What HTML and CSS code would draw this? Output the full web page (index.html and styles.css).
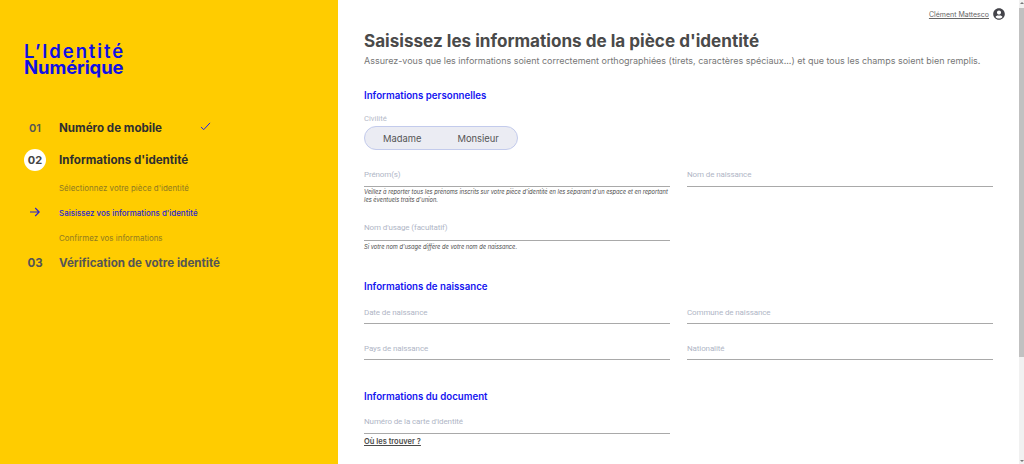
FILE: index.html
```html
<!DOCTYPE html>
<html lang="fr">
<head>
<meta charset="utf-8">
<title>Informations d'identité</title>
<link rel="stylesheet" href="styles.css">
</head>
<body>
<div class="page">
  <aside class="sidebar">
    <div class="logo"><div class="logo-top">L’Identité</div><div class="logo-bottom">Numérique</div></div>
    <ol class="steps">
      <li class="step step-done"><span class="num">01</span><span class="step-name">Numéro de mobile</span>
        <svg class="check" width="11" height="9" viewBox="0 0 12 10"><path d="M1 5.500 4 8.500 11 1" fill="none" stroke="#1f1ff0" stroke-width="1.100"/></svg></li>
      <li class="step step-current"><span class="num num-circle">02</span><span class="step-name">Informations d'identité</span></li>
      <li class="sub">Sélectionnez votre pièce d'identité</li>
      <li class="sub sub-active"><svg class="arrow" width="10" height="10" viewBox="0 0 10 10"><path d="M0 5H9M5.200 1 9.200 5 5.200 9" fill="none" stroke="#2a1fd0" stroke-width="1.100"/></svg>Saisissez vos informations d'identité</li>
      <li class="sub">Confirmez vos informations</li>
      <li class="step step-next"><span class="num">03</span><span class="step-name">Vérification de votre identité</span></li>
    </ol>
  </aside>
  <main class="main">
    <div class="user"><span class="user-name">Clément Mattesco</span>
      <svg width="12" height="12" viewBox="0 0 496 512"><path fill="#44444a" d="M248 8C111 8 0 119 0 256s111 248 248 248 248-111 248-248S385 8 248 8zm0 96c48.600 0 88 39.400 88 88s-39.400 88-88 88-88-39.400-88-88 39.400-88 88-88zm0 344c-58.700 0-111.300-26.600-146.500-68.200 18.800-35.400 55.600-59.800 98.500-59.800 2.400 0 4.800.4 7.100 1.100 13 4.200 26.600 6.900 40.900 6.900 14.300 0 28-2.700 40.900-6.900 2.300-.7 4.700-1.100 7.100-1.100 42.900 0 79.700 24.400 98.500 59.800C359.300 421.400 306.700 448 248 448z"/></svg>
    </div>
    <h1 class="title">Saisissez les informations de la pièce d'identité</h1>
    <p class="lead">Assurez-vous que les informations soient correctement orthographiées (tirets, caractères spéciaux...) et que tous les champs soient bien remplis.</p>

    <h2 class="section section-perso">Informations personnelles</h2>
    <div class="label-small">Civilité</div>
    <div class="toggle"><span>Madame</span><span>Monsieur</span></div>

    <div class="grid grid-names">
      <div class="col">
        <div class="field">Prénom(s)</div>
        <p class="hint">Veillez à reporter tous les prénoms inscrits sur votre pièce d'identité en les séparant d'un espace et en reportant les éventuels traits d'union.</p>
        <div class="field field-usage">Nom d'usage (facultatif)</div>
        <p class="hint hint-usage">Si votre nom d'usage diffère de votre nom de naissance.</p>
      </div>
      <div class="col"><div class="field">Nom de naissance</div></div>
    </div>

    <h2 class="section section-birth">Informations de naissance</h2>
    <div class="grid grid-birth">
      <div class="field">Date de naissance</div>
      <div class="field">Commune de naissance</div>
      <div class="field">Pays de naissance</div>
      <div class="field">Nationalité</div>
    </div>

    <h2 class="section section-doc">Informations du document</h2>
    <div class="grid grid-doc">
      <div class="col">
        <div class="field">Numéro de la carte d'identité</div>
        <a class="where" href="#">Où les trouver ?</a>
      </div>
    </div>
  </main>
  <div class="scrollbar"><span class="scroll-up"></span><span class="scroll-thumb"></span><span class="scroll-down"></span></div>
</div>
</body>
</html>
```
FILE: styles.css
```css
* { box-sizing: border-box; }
html, body { margin: 0; height: 100%; overflow: hidden; background: #fff; }
body { font-family: "Inter", "Open Sans", sans-serif; color: #4a4a4a; }
.page { display: flex; height: 464px; width: 1024px; }

.sidebar { width: 338px; flex: none; background: #ffcc00; padding: 44px 0 0 24px; }
.logo { color: #0f0fe6; font-weight: 600; height: 68px; }
.logo-top { font-size: 18.500px; line-height: 15px; letter-spacing: 1.900px; white-space: nowrap; }
.logo-bottom { font-size: 18.500px; line-height: 16px; font-weight: 700; letter-spacing: -0.100px; white-space: nowrap; }

.steps { list-style: none; margin: 0; padding: 0; }
.step { display: flex; align-items: center; font-weight: 700; }
.num { width: 22px; margin-right: 13px; text-align: center; font-size: 11px; font-weight: 600; color: #555; }
.step-name { font-size: 11.600px; color: #2f2f2f; }
.step-done { height: 32px; }
.check { margin: -3px 0 0 38px; }
.step-current { height: 31px; }
.num-circle { height: 22px; border-radius: 50%; background: #fff; line-height: 22px; font-weight: 700; color: #444; }
.step-next { height: 26px; }
.step-next .step-name, .step-next .num { color: #555; }
.step-next .num { font-weight: 700; font-size: 11.500px; }
.sub { display: flex; align-items: center; height: 25px; padding-left: 35px; font-size: 7.950px; font-weight: 400; color: #8f7a20; position: relative; white-space: nowrap; }
.sub-active { color: #2a1fd0; font-weight: 500; }
.arrow { position: absolute; left: 6px; top: 7px; }

.main { flex: 1; min-width: 0; padding-left: 26px; position: relative; }
.user { position: absolute; top: 8px; right: 19px; display: flex; align-items: center; gap: 4px; font-size: 7px; }
.user-name { color: #666; text-decoration: underline; }
.title { margin: 30px 0 0; font-size: 17.100px; line-height: 21px; font-weight: 700; color: #4a4a4a; white-space: nowrap; }
.lead { margin: 4px 0 0; font-size: 8.970px; line-height: 12px; color: #767676; white-space: nowrap; }

.section { margin: 0; font-size: 9.700px; line-height: 12px; font-weight: 600; color: #1414f0; }
.section-perso { margin-top: 23px; }
.section-birth { margin-top: 30px; }
.section-doc { margin-top: 31px; }

.label-small { margin-top: 12px; font-family: "Roboto", sans-serif; font-size: 7.700px; line-height: 10px; color: #b5bac8; }
.toggle { margin-top: 2px; width: 154px; height: 24px; display: flex; align-items: center; padding-left: 18px; gap: 36px; background: #ebecf3; border: 1px solid #c3cbec; border-radius: 12px; font-size: 9.400px; color: #555; }

.grid { display: grid; grid-template-columns: 306px 306px; column-gap: 17px; }
.grid-names { margin-top: 16px; }
.grid-birth { margin-top: 11px; row-gap: 16px; }
.grid-doc { margin-top: 11px; }

.field { height: 21px; padding-top: 3px; border-bottom: 1px solid #a9a9a9; font-family: "Roboto", sans-serif; font-size: 8px; letter-spacing: -0.120px; line-height: 12px; color: #b0b6c6; }
.grid-birth .field { height: 20px; }
.grid-doc .field { height: 20px; padding-top: 2px; }
.field-usage { margin-top: 16px; padding-top: 2px; }
.hint { margin: 1px 0 0; font-size: 5.730px; line-height: 8px; font-style: italic; color: #4a4a4a; }
.hint-usage { margin-top: 2px; }
.where { display: block; margin-top: 3px; font-size: 7.500px; line-height: 10px; font-weight: 600; color: #4a4a4a; }

.scrollbar { position: absolute; top: 0; right: 0; width: 5px; height: 464px; background: #f1f1f1; }
.scroll-thumb { position: absolute; top: 8px; left: 0; width: 5px; height: 349px; background: #c1c1c1; }
.scroll-up { position: absolute; top: 2px; left: 1px; border: 2px solid transparent; border-bottom-color: #777; border-top: 0; }
.scroll-down { position: absolute; bottom: 2px; left: 1px; border: 2px solid transparent; border-top-color: #777; border-bottom: 0; }
```
